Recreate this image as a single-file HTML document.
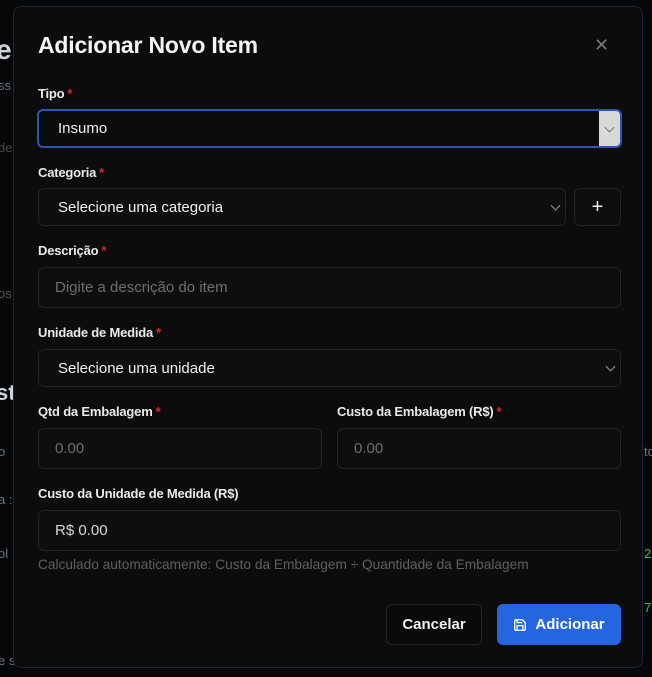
<!DOCTYPE html>
<html><head><meta charset="utf-8"><style>
*{box-sizing:border-box;margin:0;padding:0}
body{width:652px;height:677px;background:#060709;font-family:"Liberation Sans",sans-serif;position:relative;overflow:hidden;color:#f2f2f2}
.bg{position:absolute;color:#6b7280;font-size:13px}
.modal{position:absolute;left:13px;top:6px;width:630px;height:662px;background:#0c0c0d;border:1px solid #1e2433;border-radius:8px}
.a{position:absolute}
.t{left:24px;top:25px;font-size:23px;font-weight:bold;color:#f5f5f5;letter-spacing:-0.2px}
.x{left:580px;top:28px;font-size:18px;color:#777}
.l{font-size:13px;font-weight:bold;color:#eaeaea;letter-spacing:-0.2px}
.l i{color:#dc2626;font-style:normal;margin-left:3px}
.f{border:1px solid #232326;border-radius:6px;background:#0e0e0f;font-size:15px;color:#f0f0f0;padding-left:19px;display:flex;align-items:center}
.ph{color:#6e6e6e;padding-left:16px}
.chev{position:absolute;right:6px;top:50%;width:7px;height:7px;border-right:1.3px solid #9a9a9a;border-bottom:1.3px solid #9a9a9a;transform:translateY(-70%) rotate(45deg)}
</style></head><body>
<div class="bg" style="left:-4px;top:34px;font-size:28px;font-weight:bold;color:#cfd3da">e</div>
<div class="bg" style="left:-2px;top:78px">ss</div>
<div class="bg" style="left:-2px;top:140px;color:#444">de</div>
<div class="bg" style="left:-2px;top:286px;color:#555">os</div>
<div class="bg" style="left:-4px;top:380px;font-size:22px;font-weight:bold;color:#cfd3da">st</div>
<div class="bg" style="left:-2px;top:444px">o</div>
<div class="bg" style="left:-2px;top:492px">a :</div>
<div class="bg" style="left:-2px;top:546px">ol</div>
<div class="bg" style="left:-2px;top:653px">e s</div>
<div class="bg" style="left:644px;top:444px">to</div>
<div class="bg" style="left:644px;top:546px;color:#22c55e">2</div>
<div class="bg" style="left:644px;top:600px;color:#22c55e">7</div>
<div class="modal">
<div class="a t">Adicionar Novo Item</div>
<div class="a x">✕</div>
<div class="a l" style="left:24px;top:79px">Tipo<i>*</i></div>
<div class="a f" style="left:23px;top:102px;width:585px;height:39px;border:2px solid #2d55b8;background:#0b0b0c">Insumo
<div style="position:absolute;right:0;top:0;width:21px;height:35px;background:#d9d9d9;border-radius:0 4px 4px 0"><div class="chev" style="border-color:#777;right:7px"></div></div></div>
<div class="a l" style="left:24px;top:158px">Categoria<i>*</i></div>
<div class="a f" style="left:24px;top:181px;width:528px;height:38px">Selecione uma categoria<div class="chev"></div></div>
<div class="a f" style="left:560px;top:181px;width:47px;height:38px;padding:0;justify-content:center;font-size:20px">+</div>
<div class="a l" style="left:24px;top:236px">Descrição<i>*</i></div>
<div class="a f ph" style="left:24px;top:260px;width:583px;height:41px">Digite a descrição do item</div>
<div class="a l" style="left:24px;top:318px">Unidade de Medida<i>*</i></div>
<div class="a f" style="left:24px;top:342px;width:583px;height:38px">Selecione uma unidade<div class="chev"></div></div>
<div class="a l" style="left:24px;top:397px">Qtd da Embalagem<i>*</i></div>
<div class="a l" style="left:323px;top:397px">Custo da Embalagem (R$)<i>*</i></div>
<div class="a f ph" style="left:24px;top:421px;width:284px;height:41px">0.00</div>
<div class="a f ph" style="left:323px;top:421px;width:284px;height:41px">0.00</div>
<div class="a l" style="left:24px;top:479px">Custo da Unidade de Medida (R$)</div>
<div class="a f" style="left:24px;top:503px;width:583px;height:41px;padding-left:16px;color:#d8d8d8">R$ 0.00</div>
<div class="a" style="left:24px;top:550px;font-size:13.7px;color:#5f5f63">Calculado automaticamente: Custo da Embalagem ÷ Quantidade da Embalagem</div>
<div class="a f" style="left:372px;top:597px;width:96px;height:41px;padding:0;justify-content:center;font-weight:bold;font-size:15px;background:#0a0a0a">Cancelar</div>
<div class="a f" style="left:483px;top:597px;width:124px;height:41px;padding:0;justify-content:center;font-weight:bold;font-size:15px;background:#2566e0;border-color:#2566e0;color:#fff">
<svg width="14" height="14" viewBox="0 0 24 24" fill="none" stroke="#fff" stroke-width="2.2" stroke-linecap="round" stroke-linejoin="round" style="margin-right:8px"><path d="M19 21H5a2 2 0 0 1-2-2V5a2 2 0 0 1 2-2h11l5 5v11a2 2 0 0 1-2 2z"/><path d="M17 21v-8H7v8"/><path d="M7 3v5h8"/></svg>Adicionar</div>
</div>
</body></html>
